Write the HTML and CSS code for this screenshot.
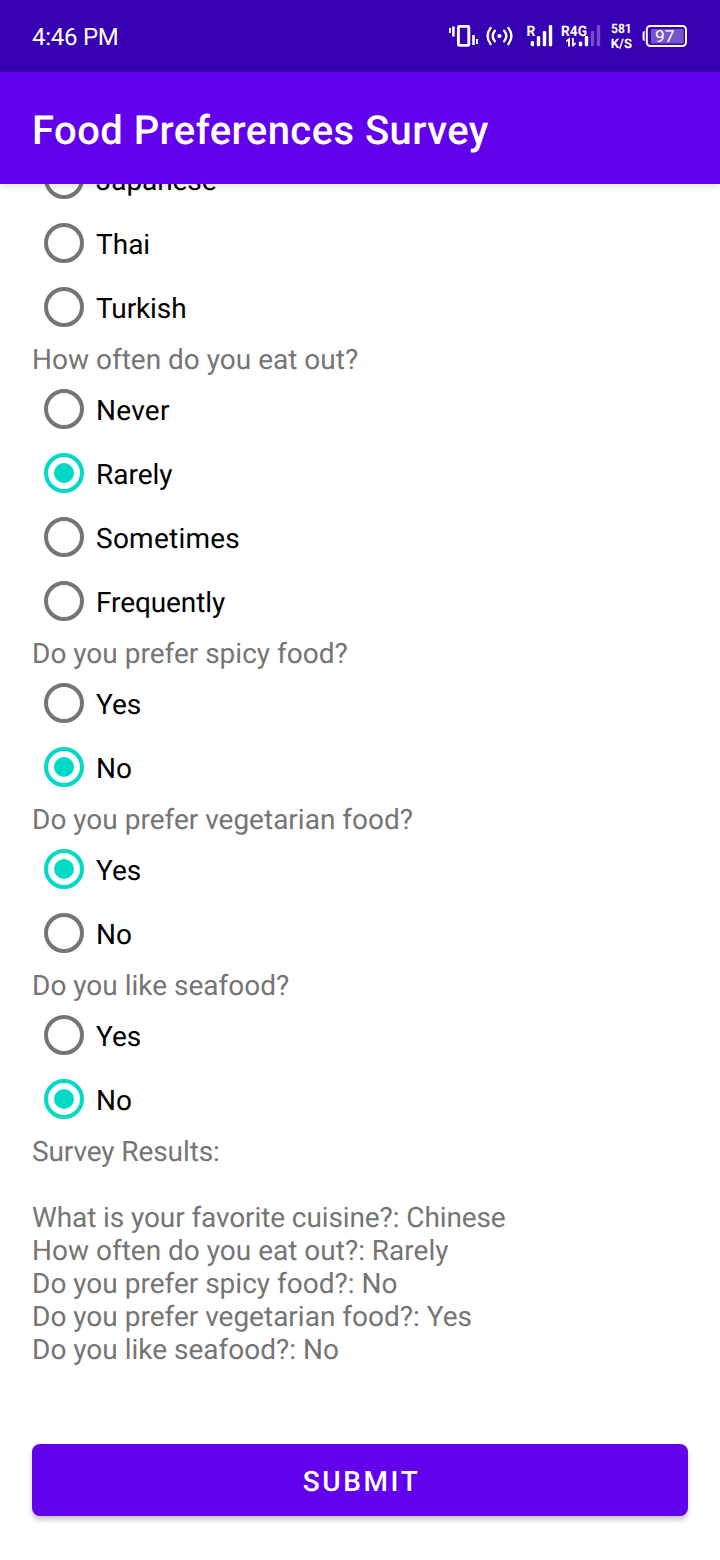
FILE: index.html
```html
<!DOCTYPE html>
<html lang="en">
<head>
<meta charset="utf-8">
<title>Food Preferences Survey</title>
<link rel="stylesheet" href="styles.css">
</head>
<body>
<div class="screen">
  <header class="status-bar">
    <span class="clock">4:46 PM</span>
    <svg class="status-icons" width="240" height="34" viewBox="448 19 240 34" fill="#fff">
      <!-- vibrate -->
      <path d="M449 28h1.9v5H449zM452.1 26.5h2.6v10h-2.6zM472.2 35h2.6v10h-2.6zM476 39h1.9v5H476z"/>
      <rect x="458.4" y="26.4" width="10.4" height="19" rx="1" fill="none" stroke="#fff" stroke-width="2.9"/>
      <!-- hotspot -->
      <circle cx="499.5" cy="36" r="2.1"/>
      <path d="M494.8 30.8Q490.6 36 494.8 41.2M504.2 30.8Q508.4 36 504.2 41.2M490.6 27.9Q484.6 36 490.6 44.1M508.4 27.9Q514.4 36 508.4 44.1" fill="none" stroke="#fff" stroke-width="2.4" stroke-linecap="round"/>
      <!-- first signal -->
      <text class="net" x="526.4" y="36" textLength="8.8" lengthAdjust="spacingAndGlyphs">R</text>
      <rect x="530.7" y="41" width="3.4" height="5.3" rx="1.4"/>
      <rect x="536.8" y="36" width="3.4" height="10.3" rx="1.3"/>
      <rect x="542.8" y="31" width="3.4" height="15.3" rx="1.3"/>
      <rect x="548.8" y="25" width="3.4" height="21.3" rx="1.3"/>
      <!-- second signal -->
      <text class="net" x="561" y="36" textLength="26" lengthAdjust="spacingAndGlyphs">R4G</text>
      <path d="M566 40.5L569 38h1v8.5h-2v-5.5l-2 1.3zM572 38h1.8v5.5l2-1.2v2l-2.6 2.2H572z"/>
      <rect x="578.8" y="41.5" width="3.4" height="4.8" rx="1.3"/>
      <rect x="584.8" y="36" width="3.4" height="10.3" rx="1.3"/>
      <rect x="590.8" y="31" width="3.4" height="15.3" rx="1.3" opacity=".3"/>
      <rect x="596.8" y="25" width="3.4" height="21.3" rx="1.3" opacity=".3"/>
      <!-- network speed -->
      <text class="speed" x="611" y="33.3" textLength="20.8" lengthAdjust="spacingAndGlyphs">581</text>
      <text class="speed" x="610.8" y="48" textLength="21.2" lengthAdjust="spacingAndGlyphs">K/S</text>
      <!-- battery -->
      <path d="M644.6 31v10q-2 0-2-2v-6q0-2 2-2z"/>
      <rect x="646.8" y="26" width="39.2" height="20" rx="3.4" fill="none" stroke="#fff" stroke-width="2"/>
      <rect x="651" y="29" width="32.7" height="14.4" rx="1" opacity=".33"/>
      <text class="level" x="655" y="42.3" textLength="19.5" lengthAdjust="spacingAndGlyphs">97</text>
    </svg>
  </header>
  <div class="app-bar"><h1>Food Preferences Survey</h1></div>
  <main class="scroll">
    <div class="survey">
      <div class="option"><i class="radio"></i><span class="tight">Japanese</span></div>
      <div class="option"><i class="radio"></i><span>Thai</span></div>
      <div class="option"><i class="radio"></i><span class="tight">Turkish</span></div>
      <p class="question">How often do you eat out?</p>
      <div class="option"><i class="radio"></i><span class="loose">Never</span></div>
      <div class="option"><i class="radio checked"></i><span>Rarely</span></div>
      <div class="option"><i class="radio"></i><span class="loose">Sometimes</span></div>
      <div class="option"><i class="radio"></i><span class="tight">Frequently</span></div>
      <p class="question">Do you prefer spicy food?</p>
      <div class="option"><i class="radio"></i><span>Yes</span></div>
      <div class="option"><i class="radio checked"></i><span>No</span></div>
      <p class="question">Do you prefer vegetarian food?</p>
      <div class="option"><i class="radio checked"></i><span>Yes</span></div>
      <div class="option"><i class="radio"></i><span>No</span></div>
      <p class="question">Do you like seafood?</p>
      <div class="option"><i class="radio"></i><span>Yes</span></div>
      <div class="option"><i class="radio checked"></i><span>No</span></div>
      <p class="results"><span class="tight">Survey Results:</span><br><br><span class="tight">What is your favorite cuisine?: Chinese</span><br>How often do you eat out?: Rarely<br>Do you prefer spicy food?: No<br>Do you prefer vegetarian food?: Yes<br>Do you like seafood?: No</p>
    </div>
  </main>
  <footer class="actions"><button class="submit">SUBMIT</button></footer>
</div>
</body>
</html>
```
FILE: styles.css
```css
* { box-sizing: border-box; }
body { margin: 0; background: #fff; font-family: Roboto, sans-serif; text-rendering: geometricPrecision; }
.screen { display: flex; flex-direction: column; width: 720px; height: 1560px; overflow: hidden; }
.status-bar {
  display: flex; flex: none; align-items: center; justify-content: space-between;
  height: 72px; padding: 0 32px; background: #3700b3; color: #fff;
}
.clock { font-size: 24px; line-height: 28px; padding-top: 1px; letter-spacing: -.25px; }
.status-icons { display: block; overflow: visible; }
.net { font-size: 14.5px; font-weight: 700; }
.speed { font-size: 13px; font-weight: 700; }
.level { font-size: 16.5px; }
.app-bar {
  display: flex; flex: none; align-items: center; height: 112px; padding: 6px 32px 0;
  background: #6200ee; color: #fff; z-index: 1; box-shadow: 0 2px 8px rgba(0, 0, 0, .14);
}
.app-bar h1 { margin: 0; font-size: 40px; font-weight: 500; line-height: 48px; letter-spacing: .43px; white-space: nowrap; }
.scroll { flex: 1; overflow: hidden; }
.survey { margin-top: -37px; padding: 0 32px; font-size: 28px; letter-spacing: 0; }
.option { display: flex; align-items: center; gap: 12px; height: 64px; padding: 0 0 0 12px; line-height: 33px; color: #000; }
.option span { padding-top: 2px; }
.tight { letter-spacing: -.1px; }
.loose { letter-spacing: .25px; }
.radio { display: grid; place-items: center; width: 40px; height: 40px; border: 4px solid #757575; border-radius: 50%; }
.radio.checked { border-color: #03dac5; }
.radio.checked::before { content: ""; width: 20px; height: 20px; border-radius: 50%; background: #03dac5; }
.question, .results { margin: 0; color: #757575; line-height: 33px; }
.question { height: 38px; padding-top: 4px; }
.results { padding-top: 4px; }
.actions { flex: none; padding: 0 32px 44px; }
.submit {
  display: block; width: 100%; height: 72px; padding: 3px 0 0 3px; border: 0; border-radius: 8px;
  background: #6200ee; color: #fff; font: 500 28px/33px Roboto, sans-serif; letter-spacing: 2.6px;
  box-shadow: 0 4px 5px rgba(0, 0, 0, .22); text-rendering: geometricPrecision;
}
```
